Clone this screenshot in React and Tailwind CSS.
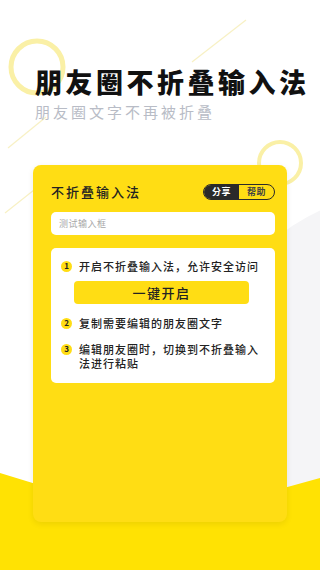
const steps = [
  { n: '1', text: '开启不折叠输入法，允许安全访问', action: true },
  { n: '2', text: '复制需要编辑的朋友圈文字' },
  { n: '3', text: '编辑朋友圈时，切换到不折叠输入法进行粘贴' },
];

const Backdrop = () => (
  <svg className="absolute inset-0 w-full h-full" viewBox="0 0 320 570" preserveAspectRatio="none">
    <circle cx="400" cy="385" r="192" fill="#f5f5f7" />
    <circle cx="37" cy="67" r="26" fill="none" stroke="#faf0a6" strokeWidth="5" />
    <circle cx="280" cy="163" r="21" fill="none" stroke="#faf0a6" strokeWidth="4" />
    <line x1="192" y1="62" x2="246" y2="20" stroke="#f8f1c4" strokeWidth="1.2" />
    <line x1="8" y1="148" x2="46" y2="117" stroke="#f8f1c4" strokeWidth="1.2" />
    <line x1="5" y1="213" x2="34" y2="190" stroke="#f8f1c4" strokeWidth="1.2" />
    <polygon points="0,473 160,522 320,478 320,570 0,570" fill="#ffe203" />
  </svg>
);

export default function App() {
  return (
    <div
      className="relative w-[320px] h-[570px] overflow-hidden bg-white"
      style={{ fontFamily: '"Noto Sans CJK SC", "Noto Sans", sans-serif' }}
    >
      <Backdrop />

      <div className="relative flex flex-col pt-[66px]">
        <h1 className="pl-[35px] text-[27px] leading-[32px] font-black tracking-[3.5px] text-[#111]">
          朋友圈不折叠输入法
        </h1>
        <p className="pl-[35px] mt-[4px] text-[15px] leading-[20px] tracking-[3px] text-[#b8bcc6]">
          朋友圈文字不再被折叠
        </p>

        <div className="mt-[43px] ml-[33px] w-[254px] h-[357px] rounded-[8px] bg-[#ffdd14] pl-[18px] pr-[12px] pt-[19px] shadow-[0_2px_6px_rgba(0,0,0,0.08)]">
          <div className="flex items-center justify-between h-[16px]">
            <span className="text-[13px] leading-[16px] tracking-[2px] font-medium text-[#222]">不折叠输入法</span>
            <div className="flex h-[16px] w-[72px] rounded-full border border-[#2a2a2a] overflow-hidden text-[9px] leading-[14px] font-bold tracking-[0.5px]">
              <span className="w-[35px] bg-[#2a2a2a] text-white flex items-center justify-center">分享</span>
              <span className="flex-1 text-[#444] flex items-center justify-center">帮助</span>
            </div>
          </div>

          <div className="mt-[12px] h-[23px] rounded-[5px] bg-white flex items-center pl-[8px] text-[9px] tracking-[0.5px] text-[#a8a8a8]">
            测试输入框
          </div>

          <div className="mt-[13px] rounded-[5px] bg-white pl-[10px] pt-[11px] pb-[13px]">
            {steps.map((s, i) => (
              <div key={s.n} className={i === 0 ? '' : 'mt-[12px]'}>
                <div className="flex items-start gap-[7px]">
                  <span className="mt-[1.5px] w-[11px] h-[11px] rounded-full bg-[#ffdd14] flex items-center justify-center text-[8px] leading-none font-bold text-[#222]">
                    {s.n}
                  </span>
                  <p className="w-[184px] text-[11px] leading-[14px] tracking-[1px] font-medium text-[#222]">{s.text}</p>
                </div>
                {s.action && (
                  <button className="mt-[8px] ml-[13px] w-[175px] h-[23px] rounded-[4px] bg-[#ffdd14] text-[13px] tracking-[1.5px] font-medium text-[#222] flex items-center justify-center">
                    一键开启
                  </button>
                )}
              </div>
            ))}
          </div>
        </div>
      </div>
    </div>
  );
}
